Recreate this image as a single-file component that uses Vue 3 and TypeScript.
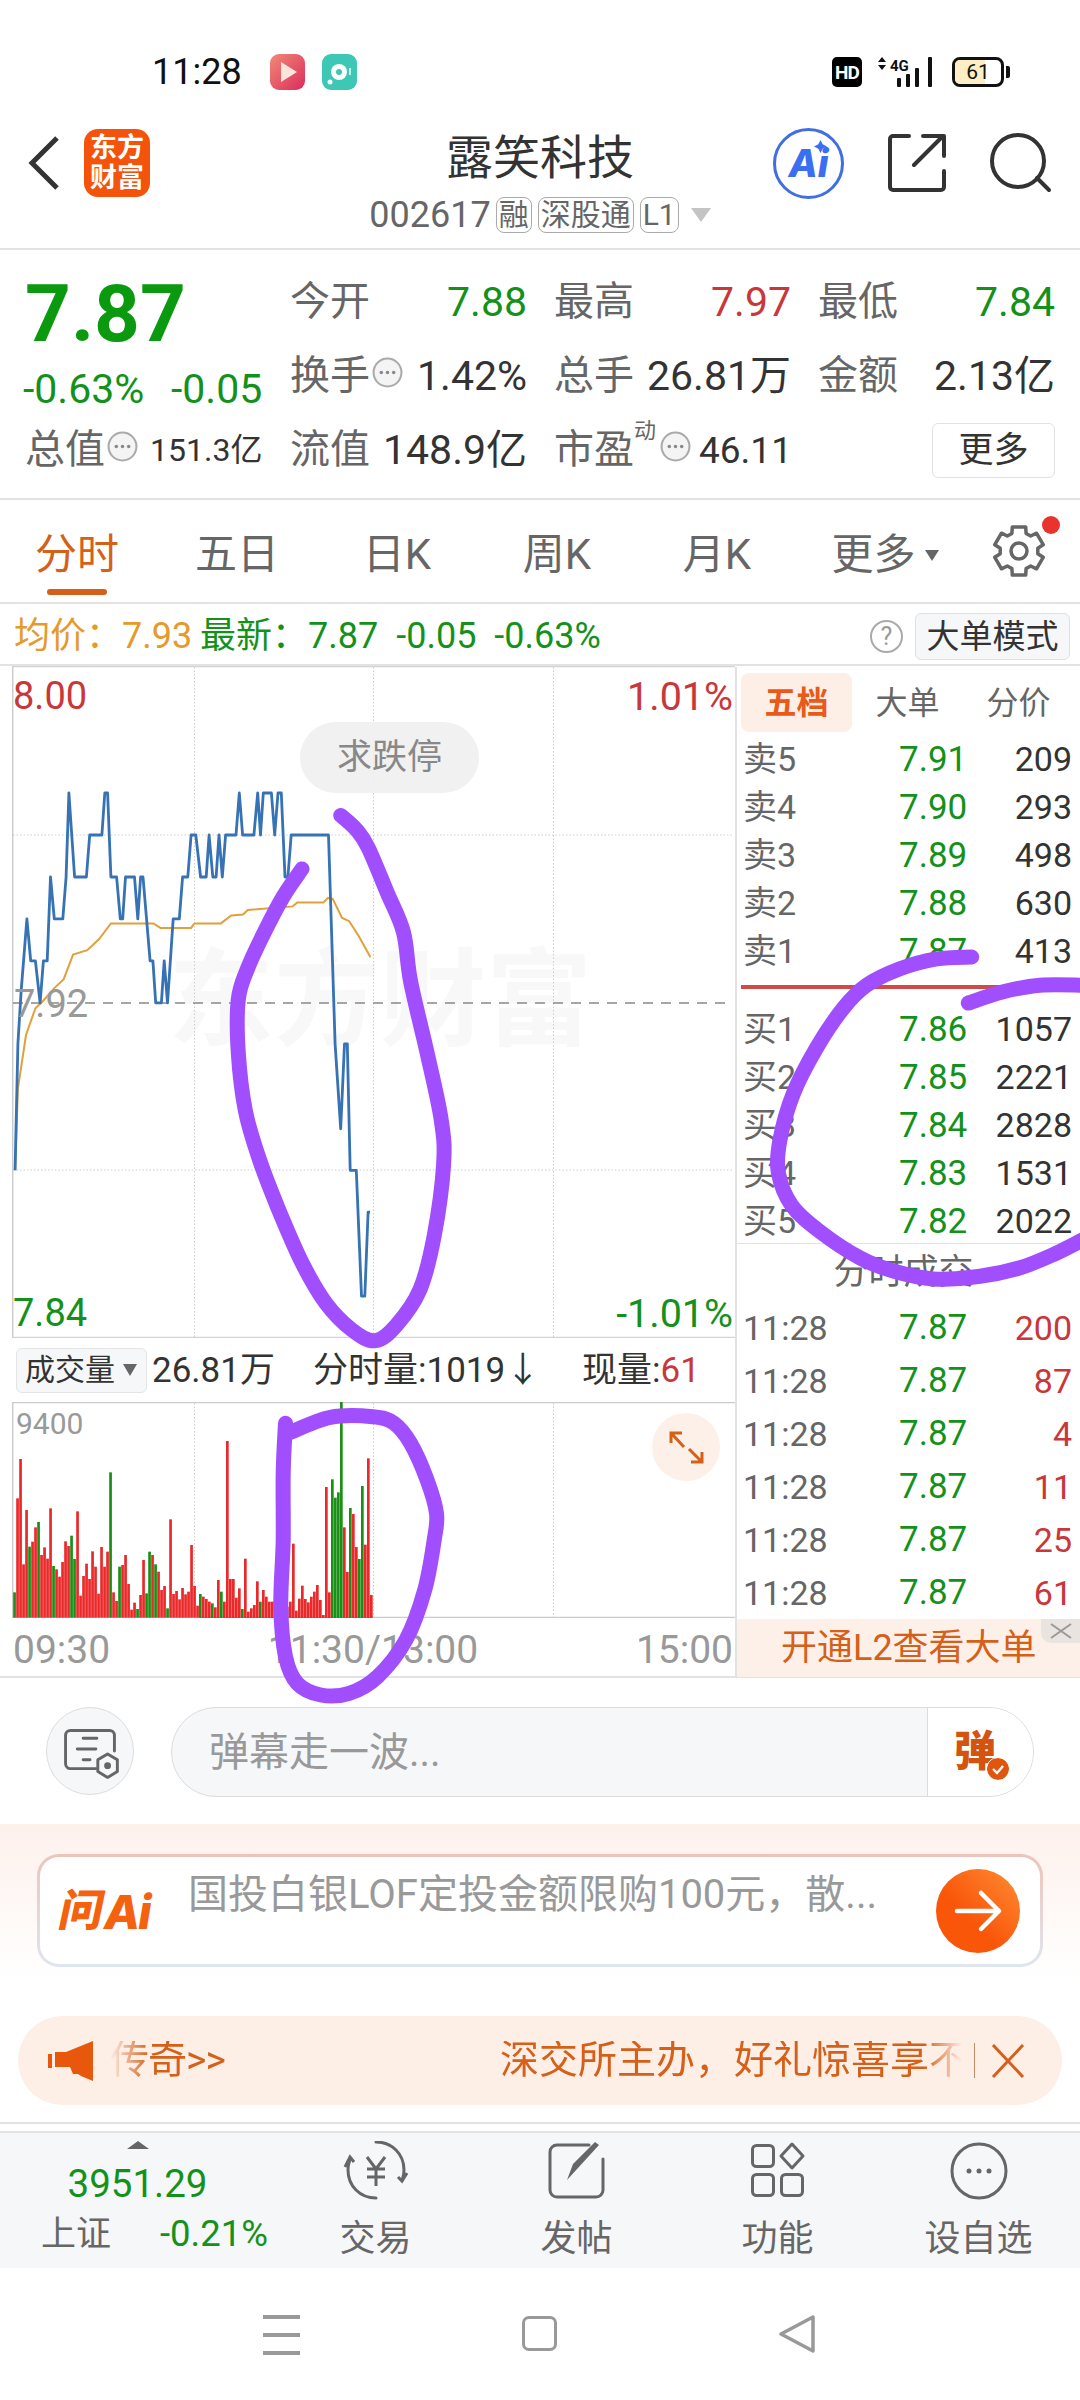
<script setup lang="ts">
type Pt = [number, number]

// Catmull-Rom through the points, written as cubic beziers
function smooth(p: Pt[]): string {
  let d = `M${p[0][0].toFixed(1)} ${p[0][1].toFixed(1)}`
  for (let i = 0; i < p.length - 1; i++) {
    const a = p[Math.max(i - 1, 0)]
    const b = p[i]
    const c = p[i + 1]
    const e = p[Math.min(i + 2, p.length - 1)]
    const c1x = b[0] + (c[0] - a[0]) / 6
    const c1y = b[1] + (c[1] - a[1]) / 6
    const c2x = c[0] - (e[0] - b[0]) / 6
    const c2y = c[1] - (e[1] - b[1]) / 6
    d += `C${c1x.toFixed(1)} ${c1y.toFixed(1)} ${c2x.toFixed(1)} ${c2y.toFixed(1)} ${c[0].toFixed(1)} ${c[1].toFixed(1)}`
  }
  return d
}

const chartPt = (q: Pt): Pt => [q[0] / 2.119, 660 + q[1] / 2.24]
const toPoly = (list: Pt[]) => list.map(chartPt).map((q) => `${q[0].toFixed(1)},${q[1].toFixed(1)}`).join(' ')

// Intraday price, on the 7.84–8.00 scale
const priceLine = toPoly([
  [32,1143],[38,860],[45,740],[57,580],[65,674],[75,674],[85,768],[92,674],[100,674],[107,486],[115,580],[133,580],
  [140,486],[146,298],[158,486],[183,486],[190,392],[216,392],[222,298],[228,298],[235,486],[247,486],[255,580],
  [260,580],[266,486],[285,486],[292,580],[298,486],[303,486],[318,674],[324,674],[330,768],[342,768],[348,674],
  [355,768],[367,580],[380,580],[387,486],[398,486],[405,392],[415,392],[425,486],[437,486],[443,392],[451,486],
  [458,486],[464,392],[471,486],[478,392],[500,392],[507,298],[514,392],[538,392],[546,298],[552,392],[558,298],
  [575,298],[582,392],[589,298],[596,298],[604,486],[610,486],[617,392],[696,392],[710,860],[722,1050],[730,860],
  [736,860],[742,1143],[755,1143],[766,1425],[773,1425],[780,1237],[784,1237],
])

// Average price
const avgLine = toPoly([
  [32,1143],[38,960],[55,840],[75,780],[90,765],[115,735],[135,715],[155,660],[185,650],[210,625],[235,590],[325,590],
  [340,600],[405,600],[412,590],[468,590],[490,572],[515,570],[525,560],[620,552],[630,543],[685,543],[695,533],
  [705,535],[725,578],[740,585],[760,618],[785,666],
])

// Per-minute volume: bar tops, negative values are down-ticks
const morning = [-457,175,57,373,210,-320,305,262,-246,345,322,356,205,-378,388,410,366,304,318,-287,-357,214,467,408,371,417,334,380,461,321,380,335,-97,457,483,-380,375,345,432,509,488,-507,465,360,-460,-335,345,-373,395,450,438,-505,238,462,453,478,444,463,455,315,438,497]
const midday = [-582,590,597,605,-610,622,540,-575,605,123,537,537,593,565,-627,476,635,625,615,544,-605,570,590,605,605,-618,620,630,600,620,605,431,632,596,557,597,607,590,575,555,600,645,261,577,-238,-293,-277,-5,382,516,-324,342,441,-477,-258,434,175,585]

interface Bar { x: number; y: number; h: number; down: boolean }
const bars: Bar[] = [
  ...morning.map((t, i) => {
    const top = Math.abs(t)
    return { x: 13.2 + i * 3, y: 1440 + top / 3, h: (533 - top) / 3, down: t < 0 }
  }),
  ...midday.map((t, i) => {
    const top = Math.abs(t)
    return { x: 199 + i * 3, y: 1400 + top / 3, h: (655 - top) / 3, down: t < 0 }
  }),
]

// Hand-drawn marker strokes across the page
const loopChart = smooth(([
  [640,468],[600,530],[560,610],[525,690],[505,760],[505,880],[520,1010],[550,1120],[590,1230],[640,1350],[690,1440],
  [745,1500],[795,1525],[840,1490],[890,1410],[920,1290],[940,1130],[935,1030],[905,880],[870,720],[855,610],[820,520],
  [780,420],[755,380],[722,348],
] as Pt[]).map(chartPt))
const loopVolume = smooth(([
  [605,250],[600,400],[600,600],[595,800],[605,950],[630,1030],[680,1065],[740,1060],[800,1010],[860,900],[900,750],
  [920,600],[925,520],[905,420],[870,310],[835,250],[790,230],[700,232],[610,280],
] as Pt[]).map((q): Pt => [q[0] / 2.119, 1340 + q[1] / 3]))
const depthPt = (q: Pt): Pt => [720 + q[0] / 3, 660 + q[1] / 1.522]
const loopDepth = smooth(([
  [755,452],[650,455],[540,470],[440,495],[370,530],[290,590],[220,660],[180,730],[175,780],[215,830],[300,870],
  [420,910],[520,930],[640,942],[780,938],[900,925],[1000,905],[1090,882],
] as Pt[]).map(depthPt))
const loopDepthTop = smooth(([[745,522],[850,505],[960,495],[1090,495]] as Pt[]).map(depthPt))

// Six-tooth settings gear
function gearPath(cx: number, cy: number, outer: number, inner: number): string {
  const pts: string[] = []
  for (let i = 0; i < 6; i++) {
    const a = (Math.PI / 3) * i - Math.PI / 2
    const w = 0.27
    const step = Math.PI / 3
    const corners: [number, number][] = [
      [inner, a - step / 2 + 0.14],
      [outer, a - w],
      [outer, a + w],
      [inner, a + step / 2 - 0.14],
    ]
    corners.forEach(([r, t]) => pts.push(`${(cx + r * Math.cos(t)).toFixed(1)} ${(cy + r * Math.sin(t)).toFixed(1)}`))
  }
  return `M${pts.join('L')}Z`
}
const gear = gearPath(27, 27, 25, 19)

const tabs = ['分时', '五日', '日K', '周K', '月K']
const sells = [
  { l: '卖5', p: '7.91', v: '209' },
  { l: '卖4', p: '7.90', v: '293' },
  { l: '卖3', p: '7.89', v: '498' },
  { l: '卖2', p: '7.88', v: '630' },
  { l: '卖1', p: '7.87', v: '413' },
]
const buys = [
  { l: '买1', p: '7.86', v: '1057' },
  { l: '买2', p: '7.85', v: '2221' },
  { l: '买3', p: '7.84', v: '2828' },
  { l: '买4', p: '7.83', v: '1531' },
  { l: '买5', p: '7.82', v: '2022' },
]
const trades = ['200', '87', '4', '11', '25', '61']
</script>

<template>
  <div class="page">
    <svg class="defs" width="0" height="0">
      <symbol id="more-dots" viewBox="0 0 30 30">
        <circle cx="15" cy="15" r="13.5" fill="#f4f4f4" stroke="#aaa" stroke-width="2" />
        <circle cx="9" cy="15" r="1.7" fill="#888" />
        <circle cx="15" cy="15" r="1.7" fill="#888" />
        <circle cx="21" cy="15" r="1.7" fill="#888" />
      </symbol>
    </svg>

    <!-- system status bar -->
    <div class="status">
      <span class="clock">11:28</span>
      <svg class="app-ico" viewBox="0 0 35 36">
        <defs>
          <linearGradient id="playBg" x1="0" y1="0" x2="1" y2="1">
            <stop offset="0" stop-color="#f08a78" />
            <stop offset="1" stop-color="#dc2c5a" />
          </linearGradient>
        </defs>
        <rect width="35" height="36" rx="9" fill="url(#playBg)" />
        <path d="M11 8L27 18L11 28Z" fill="#fbe4dc" />
      </svg>
      <svg class="app-ico second" viewBox="0 0 35 36">
        <rect width="35" height="36" rx="9" fill="#3cc8b4" />
        <circle cx="17" cy="18" r="8" fill="#fff" />
        <circle cx="17" cy="18" r="3" fill="#3cc8b4" />
        <circle cx="8" cy="28" r="2.5" fill="#fff" />
        <rect x="27" y="14" width="2" height="7" fill="#fff" opacity=".7" />
      </svg>
      <div class="status-right">
        <span class="hd">HD</span>
        <svg class="signal" viewBox="0 0 56 30">
          <path d="M4 0L8 5H0Z M4 13L0 8H8Z" fill="#111" />
          <text x="12" y="14" class="net">4G</text>
          <rect x="19" y="21" width="4" height="9" rx="1" fill="#111" />
          <rect x="28" y="17" width="4" height="13" rx="1" fill="#111" />
          <rect x="37" y="11" width="4" height="19" rx="1" fill="#111" />
          <rect x="50" y="0" width="4" height="30" rx="1" fill="#111" />
        </svg>
        <div class="battery"><span class="battery-fill"></span><span class="battery-num">61</span></div>
        <span class="battery-cap"></span>
      </div>
    </div>

    <!-- stock title bar -->
    <header class="head">
      <div class="head-left">
        <svg class="back" viewBox="0 0 32 56"><path d="M29 3L4 28L29 53" fill="none" stroke="#333" stroke-width="5" /></svg>
        <div class="logo"><span>东方</span><span>财富</span></div>
      </div>
      <div class="head-mid">
        <div class="title">露笑科技</div>
        <div class="sub">
          <span class="code">002617</span>
          <span class="tag">融</span>
          <span class="tag">深股通</span>
          <span class="tag">L1</span>
          <span class="sub-caret"></span>
        </div>
      </div>
      <div class="head-right">
        <div class="ai-badge">
          <span>Ai</span>
          <svg class="spark" viewBox="0 0 12 12"><path d="M6 0L8 4L12 6L8 8L6 12L4 8L0 6L4 4Z" fill="#3b6ef0" /></svg>
        </div>
        <svg class="act share" viewBox="888 153 58 58">
          <path d="M909 155H893a3 3 0 0 0-3 3V206a3 3 0 0 0 3 3H941a3 3 0 0 0 3-3V190M914 184L943 155M923 155H944V175" fill="none" stroke="#333" stroke-width="4" stroke-linecap="round" stroke-linejoin="round" />
        </svg>
        <svg class="act search" viewBox="990 152 62 60">
          <circle cx="1018" cy="180" r="26" fill="none" stroke="#333" stroke-width="4" />
          <path d="M1037 197L1049 209" stroke="#333" stroke-width="4" stroke-linecap="round" />
        </svg>
      </div>
    </header>

    <!-- quote summary -->
    <section class="quote">
      <div class="quote-left">
        <div class="price">7.87</div>
        <div class="change"><span>-0.63%</span><span>-0.05</span></div>
        <div class="cap">
          <span class="lab">总值</span>
          <svg class="dots"><use href="#more-dots" /></svg>
          <span class="cap-val">151.3亿</span>
        </div>
      </div>
      <div class="quote-grid">
        <div class="cell"><span class="lab">今开</span><span class="up-g">7.88</span></div>
        <div class="cell"><span class="lab">最高</span><span class="dn-r">7.97</span></div>
        <div class="cell"><span class="lab">最低</span><span class="up-g">7.84</span></div>
        <div class="cell">
          <span class="lab-group"><span class="lab">换手</span><svg class="dots"><use href="#more-dots" /></svg></span>
          <span class="val">1.42%</span>
        </div>
        <div class="cell"><span class="lab">总手</span><span class="val">26.81万</span></div>
        <div class="cell"><span class="lab">金额</span><span class="val">2.13亿</span></div>
        <div class="cell"><span class="lab">流值</span><span class="val">148.9亿</span></div>
        <div class="cell">
          <span class="lab-group">
            <span class="lab">市盈</span>
            <sup class="dyn">动</sup>
            <svg class="dots"><use href="#more-dots" /></svg>
            <span class="pe">46.11</span>
          </span>
        </div>
        <div class="cell end"><span class="more-btn">更多</span></div>
      </div>
    </section>

    <!-- chart period tabs -->
    <nav class="tabs">
      <div class="tab-list">
        <span v-for="(t, i) in tabs" :key="t" class="tab" :class="{ active: i === 0 }">{{ t }}</span>
        <span class="tab more">更多<i class="tab-caret"></i></span>
      </div>
      <div class="gear">
        <svg viewBox="0 0 54 54" width="54" height="54">
          <path :d="gear" fill="none" stroke="#666" stroke-width="3.5" stroke-linejoin="round" />
          <circle cx="27" cy="27" r="8" fill="none" stroke="#666" stroke-width="3.5" />
        </svg>
        <i class="gear-dot"></i>
      </div>
    </nav>

    <!-- latest price strip -->
    <div class="strip">
      <span class="avg">均价：<b>7.93</b></span>
      <span class="now">最新：<b>7.87</b></span>
      <span class="now gap">-0.05</span>
      <span class="now gap">-0.63%</span>
      <span class="help">?</span>
      <span class="mode-btn">大单模式</span>
    </div>

    <main class="board">
      <div class="charts">
        <div class="trend">
          <div class="watermark">东方财富</div>
          <svg class="trend-svg" viewBox="0 666 735 672" width="735" height="672">
            <path d="M13 666.5H735M13 1337.5H735" stroke="#d4d4d4" stroke-width="1.5" />
            <path d="M12.7 666V1338" stroke="#ccc" stroke-width="1.5" />
            <path d="M13 835H733M13 1170H733M194.5 667V1337M373.5 667V1337M553.5 667V1337" stroke="#ccc" stroke-width="1" stroke-dasharray="1.5 2" />
            <path d="M13 1003H733" stroke="#888" stroke-width="1.5" stroke-dasharray="10 8" />
            <polyline :points="avgLine" fill="none" stroke="#e2a03c" stroke-width="2" />
            <polyline :points="priceLine" fill="none" stroke="#3672b4" stroke-width="2.8" stroke-linejoin="round" />
          </svg>
          <span class="axis top-l dn-r">8.00</span>
          <span class="axis pct top-r dn-r">1.01%</span>
          <span class="axis mid-l">7.92</span>
          <span class="axis low-l up-g">7.84</span>
          <span class="axis pct low-r up-g">-1.01%</span>
          <span class="wish">求跌停</span>
        </div>

        <div class="vol-head">
          <span class="vol-select">成交量<i></i></span>
          <span class="vol-total">26.81万</span>
          <span class="vol-min">分时量:1019<em>↓</em></span>
          <span class="vol-cur">现量:<b>61</b></span>
        </div>

        <div class="volume">
          <svg class="vol-svg" viewBox="0 1402 735 216" width="735" height="216">
            <path d="M13 1402.5H735M13 1617.5H735" stroke="#ccc" stroke-width="1.5" />
            <path d="M12.7 1402V1618" stroke="#ccc" stroke-width="1.5" />
            <path d="M194.5 1403V1617M373.5 1403V1617M553.5 1403V1617" stroke="#ccc" stroke-width="1" stroke-dasharray="1.5 2" />
            <rect v-for="(b, i) in bars" :key="i" :x="b.x" :y="b.y" width="2.7" :height="b.h" :fill="b.down ? '#1b8f16' : '#ea2a2a'" />
          </svg>
          <span class="vol-max">9400</span>
          <span class="expand">
            <svg viewBox="668 1430 37 35" width="37" height="35">
              <path d="M671 1443V1433H682M671 1433L684 1447M702 1452V1462H691M702 1462L689 1449" fill="none" stroke="#d4601a" stroke-width="3" />
            </svg>
          </span>
        </div>

        <div class="time-axis"><span>09:30</span><span>11:30/13:00</span><span>15:00</span></div>
      </div>

      <aside class="depth">
        <div class="depth-tabs">
          <span class="depth-tab on">五档</span>
          <span class="depth-tab">大单</span>
          <span class="depth-tab">分价</span>
        </div>
        <div v-for="r in sells" :key="r.l" class="row">
          <span class="gray">{{ r.l }}</span><span class="up-g">{{ r.p }}</span><span class="dark">{{ r.v }}</span>
        </div>
        <div class="divider"></div>
        <div class="buy-block">
          <div v-for="r in buys" :key="r.l" class="row">
            <span class="gray">{{ r.l }}</span><span class="up-g">{{ r.p }}</span><span class="dark">{{ r.v }}</span>
          </div>
        </div>
        <div class="trade-title">分时成交<i></i></div>
        <div v-for="(v, i) in trades" :key="i" class="row trade">
          <span class="gray">11:28</span><span class="up-g">7.87</span><span class="dn-r">{{ v }}</span>
        </div>
        <div class="l2">
          开通L2查看大单
          <span class="l2-close">
            <svg viewBox="0 0 24 16" width="24" height="16"><path d="M2 1L22 15M22 1L2 15" stroke="#999" stroke-width="2" /></svg>
          </span>
        </div>
      </aside>
    </main>

    <!-- danmaku input -->
    <div class="compose">
      <span class="compose-ico">
        <svg viewBox="46 1708 88 88" width="88" height="88">
          <path d="M96 1770H70a5 5 0 0 1-5-5V1736a5 5 0 0 1 5-5H110a5 5 0 0 1 5 5V1752" fill="none" stroke="#666" stroke-width="3" stroke-linecap="round" />
          <path d="M83 1739H97M77 1750H96M83 1761H90" stroke="#666" stroke-width="3" stroke-linecap="round" />
          <path d="M108 1755L118 1761V1773L108 1779L98 1773V1761Z" fill="none" stroke="#666" stroke-width="3" stroke-linejoin="round" />
          <circle cx="108" cy="1767" r="3.5" fill="#666" />
        </svg>
      </span>
      <div class="input">
        <span class="placeholder">弹幕走一波...</span>
        <span class="send">
          <b>弹</b>
          <svg class="send-ok" viewBox="0 0 22 22" width="22" height="22">
            <circle cx="11" cy="11" r="11" fill="#e0560f" />
            <path d="M6 11L10 15L16 8" fill="none" stroke="#fff" stroke-width="2.4" />
          </svg>
        </span>
      </div>
    </div>

    <!-- assistant prompt and notice -->
    <section class="promo">
      <div class="ask">
        <span class="ask-logo"><b>问</b><em>Ai</em></span>
        <span class="ask-text">国投白银LOF定投金额限购100元，散...</span>
        <span class="ask-go">
          <svg viewBox="0 0 84 84" width="84" height="84">
            <path d="M21 42H62M45 24L63 42L45 60" fill="none" stroke="#fff" stroke-width="4.5" stroke-linecap="round" stroke-linejoin="round" />
          </svg>
        </span>
      </div>
      <div class="notice">
        <svg class="horn" viewBox="0 0 46 40" width="46" height="40">
          <path d="M0 13H4V27H0ZM7 11H18L45 0V40L33 35L30 33H25L22 26H7Z" fill="#e8580c" />
        </svg>
        <span class="notice-a">传奇&gt;&gt;</span>
        <span class="notice-b">深交所主办，好礼惊喜享不</span>
        <span class="notice-sep"></span>
        <svg class="notice-x" viewBox="0 0 36 36" width="36" height="36"><path d="M3 2L33 34M33 2L3 34" stroke="#d4601a" stroke-width="3" /></svg>
      </div>
    </section>

    <!-- bottom action bar -->
    <footer class="dock">
      <div class="index">
        <i class="index-caret"></i>
        <div class="index-num">3951.29</div>
        <div class="index-sub"><span>上证</span><b>-0.21%</b></div>
      </div>
      <div class="dock-item">
        <svg viewBox="343 2142 66 60" width="66" height="60">
          <path d="M376 2143C392 2143 404 2155 404 2171C404 2174 403.5 2177 402.5 2180M376 2199C360 2199 348 2187 348 2171C348 2168 348.5 2165 349.5 2162" fill="none" stroke="#666" stroke-width="3" stroke-linecap="round" />
          <path d="M407 2174L402 2182L398 2178M345 2168L350 2158L354 2163" fill="none" stroke="#666" stroke-width="3" />
          <path d="M367 2158L376 2170L385 2158M376 2170V2187M367 2170H385M367 2178H385" fill="none" stroke="#666" stroke-width="3" />
        </svg>
        <span>交易</span>
      </div>
      <div class="dock-item">
        <svg viewBox="548 2142 60 60" width="60" height="60">
          <path d="M590 2146H558a7 7 0 0 0-7 7V2191a7 7 0 0 0 7 7H597a7 7 0 0 0 7-7V2160" fill="none" stroke="#666" stroke-width="3" stroke-linecap="round" />
          <path d="M600 2146L568 2181L574 2165L596 2143Z" fill="#666" />
        </svg>
        <span>发帖</span>
      </div>
      <div class="dock-item">
        <svg viewBox="750 2144 58 58" width="58" height="58">
          <rect x="753.5" y="2147.5" width="21" height="21" rx="4" fill="none" stroke="#666" stroke-width="3" />
          <rect x="753.5" y="2176.5" width="21" height="21" rx="4" fill="none" stroke="#666" stroke-width="3" />
          <rect x="782.5" y="2176.5" width="21" height="21" rx="4" fill="none" stroke="#666" stroke-width="3" />
          <path d="M793 2146L804 2158L793 2170L782 2158Z" fill="none" stroke="#666" stroke-width="3" stroke-linejoin="round" />
        </svg>
        <span>功能</span>
      </div>
      <div class="dock-item">
        <svg viewBox="949 2142 60 60" width="60" height="60">
          <circle cx="979" cy="2172" r="27" fill="none" stroke="#666" stroke-width="3" />
          <circle cx="969" cy="2172" r="2.5" fill="#666" />
          <circle cx="979" cy="2172" r="2.5" fill="#666" />
          <circle cx="989" cy="2172" r="2.5" fill="#666" />
        </svg>
        <span>设自选</span>
      </div>
    </footer>

    <!-- system navigation -->
    <div class="sysnav">
      <span class="burger"><i></i><i></i><i></i></span>
      <span class="home"></span>
      <svg class="sys-back" viewBox="0 0 38 38" width="38" height="38">
        <path d="M35 2V36L3 19Z" fill="none" stroke="#999" stroke-width="3.5" stroke-linejoin="round" />
      </svg>
    </div>

    <!-- marker strokes drawn over the finished page -->
    <svg class="marker" viewBox="0 0 1080 2400" width="1080" height="2400">
      <path :d="loopChart" />
      <path :d="loopVolume" />
      <path :d="loopDepth" />
      <path :d="loopDepthTop" />
    </svg>
  </div>
</template>

<style scoped>
.page {
  position: relative;
  width: 1080px;
  height: 2400px;
  overflow: hidden;
  background: #fff;
  font-family: Roboto, "Noto Sans CJK SC", sans-serif;
  color: #333;
  line-height: 1;
}
.defs { position: absolute; }
.up-g { color: #14911a; }
.dn-r { color: #c8373a; }

/* status bar */
.status {
  height: 105px;
  padding: 40px 70px 1px 152px;
  box-sizing: border-box;
  display: flex;
  align-items: center;
}
.clock { font-size: 36px; color: #111; width: 118px; }
.app-ico { width: 35px; height: 36px; }
.app-ico.second { margin-left: 17px; }
.status-right { margin-left: auto; display: flex; align-items: center; }
.hd {
  width: 30px; height: 30px; border-radius: 5px; background: #000; color: #fff;
  font-size: 19px; font-weight: 700; letter-spacing: -1px;
  display: flex; align-items: center; justify-content: center;
}
.signal { width: 56px; height: 30px; margin-left: 16px; }
.net { font-size: 15px; font-weight: 700; fill: #111; font-family: Roboto, sans-serif; }
.battery {
  position: relative; margin-left: 18px; width: 52px; height: 30px; box-sizing: border-box;
  border: 3px solid #111; border-radius: 8px; overflow: hidden;
  display: flex; align-items: center; justify-content: center;
}
.battery-fill { position: absolute; left: 0; top: 0; bottom: 0; width: 65%; background: #fdeec4; }
.battery-num { position: relative; font-size: 21px; color: #111; }
.battery-cap { width: 4px; height: 12px; margin-left: 2px; background: #111; border-radius: 0 2px 2px 0; }

/* title bar */
.head {
  height: 145px;
  box-sizing: border-box;
  border-bottom: 2px solid #e2e2e2;
  display: grid;
  grid-template-columns: 1fr auto 1fr;
  padding: 0 28px 0 28px;
}
.head-left { display: flex; align-items: center; padding-top: 9px; padding-bottom: 36px; }
.back { width: 32px; height: 56px; }
.logo {
  margin-left: 24px; width: 66px; height: 68px; border-radius: 14px; background: #f4530b; color: #fff;
  font-size: 27px; font-weight: 700; line-height: 30px;
  display: flex; flex-direction: column; align-items: center; justify-content: center;
}
.head-mid { display: flex; flex-direction: column; align-items: center; padding-top: 28px; }
.title { font-size: 47px; height: 50px; line-height: 50px; color: #333; }
.sub { display: flex; align-items: center; margin-top: 14px; color: #666; height: 36px; }
.code { font-size: 36px; margin-right: 5px; }
.tag {
  font-size: 30px; height: 36px; line-height: 34px; padding: 0 2px; box-sizing: border-box;
  border: 1.5px solid #aaa; border-radius: 8px; margin-right: 6px;
}
.sub-caret {
  margin-left: 6px; width: 0; height: 0;
  border-left: 10px solid transparent; border-right: 10px solid transparent; border-top: 14px solid #c4c4c4;
}
.head-right { display: flex; align-items: center; justify-content: flex-end; padding-top: 9px; padding-bottom: 36px; }
.ai-badge {
  position: relative; width: 71px; height: 71px; box-sizing: border-box;
  border: 3.5px solid #3f6fe0; border-radius: 50%;
  display: flex; align-items: center; justify-content: center;
  color: #3b6ef0; font: italic 800 38px Inter, sans-serif;
}
.spark { position: absolute; width: 13px; height: 13px; right: 14px; top: 9px; }
.act.share { width: 58px; height: 58px; margin-left: 44px; }
.act.search { width: 62px; height: 60px; margin-left: 44px; }

/* quote */
.quote {
  height: 250px;
  box-sizing: border-box;
  border-bottom: 2px solid #e2e2e2;
  padding: 15px 25px 0;
  display: flex;
}
.quote-left { width: 265px; flex: none; }
.price { height: 96px; line-height: 98px; font-size: 80px; font-weight: 700; color: #0b9a0f; }
.change { height: 52px; padding-top: 5px; box-sizing: border-box; display: flex; align-items: center; font-size: 41px; color: #14911a; margin-left: -2px; }
.change span:first-child { width: 148px; }
.cap { height: 74px; display: flex; align-items: center; }
.cap-val { font-size: 32px; margin-left: 12px; color: #333; }
.lab { font-size: 40px; color: #666; flex: none; white-space: nowrap; }
.dots { width: 31px; height: 31px; margin-left: 2px; flex: none; align-self: center; margin-bottom: 8px; }
.quote-grid {
  display: grid;
  grid-template-columns: 237px 237px 237px;
  grid-auto-rows: 74px;
  column-gap: 27px;
  font-size: 41px;
}
.cell { display: flex; align-items: center; justify-content: space-between; }
.cell.end { justify-content: flex-end; }
.lab-group { display: flex; align-items: center; flex: none; white-space: nowrap; }
.val { color: #333; white-space: nowrap; }
.dyn { font-size: 22px; color: #666; align-self: flex-start; margin-top: -10px; width: 24px; flex: none; }
.pe { font-size: 37px; color: #333; margin-left: 8px; }
.more-btn {
  width: 123px; height: 55px; box-sizing: border-box; border: 1.5px solid #e2e2e2; border-radius: 6px;
  display: flex; align-items: center; justify-content: center; font-size: 35px; color: #333;
}

/* tabs */
.tabs {
  height: 104px;
  box-sizing: border-box;
  border-bottom: 2px solid #e2e2e2;
  display: flex;
  align-items: center;
}
.tab-list { display: grid; grid-template-columns: repeat(6, 160px); margin-left: -3px; }
.tab { position: relative; text-align: center; font-size: 42px; color: #666; padding-top: 8px; }
.tab.active { color: #d4601a; }
.tab.active::after {
  content: ""; position: absolute; left: 50px; width: 60px; height: 6px; top: 63px;
  background: #d4601a; border-radius: 3px;
}
.tab.more { display: flex; align-items: center; justify-content: center; padding-left: 16px; }
.tab-caret {
  margin-left: 9px; width: 0; height: 0;
  border-left: 7px solid transparent; border-right: 7px solid transparent; border-top: 11px solid #666;
}
.gear { position: relative; margin-left: 35px; width: 54px; height: 54px; }
.gear-dot { position: absolute; right: -14px; top: -8px; width: 18px; height: 18px; border-radius: 50%; background: #e8332e; }

/* strip */
.strip {
  height: 62px;
  box-sizing: border-box;
  border-bottom: 2px solid #e2e2e2;
  padding: 4px 10px 0 14px;
  display: flex;
  align-items: center;
  font-size: 36px;
}
.strip b { font-weight: 400; }
.avg { color: #e59a2a; width: 186px; }
.now { color: #14911a; }
.now.gap { margin-left: 18px; }
.help {
  margin-left: auto; width: 33px; height: 33px; box-sizing: border-box; border: 2px solid #aaa; border-radius: 50%;
  font-size: 25px; color: #999; display: flex; align-items: center; justify-content: center;
}
.mode-btn {
  margin-left: 12px; width: 155px; height: 47px; box-sizing: border-box; background: #f6f7f9;
  border: 1.5px solid #e0e0e0; border-radius: 6px; font-size: 33px; color: #333;
  display: flex; align-items: center; justify-content: center;
}

/* board */
.board {
  height: 1012px;
  box-sizing: border-box;
  display: flex;
  border-bottom: 2px solid #e2e2e2;
}
.charts { width: 735px; flex: none; }
.trend { position: relative; height: 672px; }
.trend-svg { position: relative; display: block; }
.watermark {
  position: absolute; left: 168px; top: 282px; font-size: 106px; font-weight: 700; color: #f8f8f8; white-space: nowrap;
}
.axis { position: absolute; font-size: 38px; }
.axis.pct { font-size: 39.5px; }
.top-l { left: 13px; top: 11px; }
.top-r { right: 2px; top: 11px; }
.mid-l { left: 14px; top: 319px; color: #999; }
.low-l { left: 13px; top: 628px; }
.low-r { right: 2px; top: 628px; }
.wish {
  position: absolute; left: 300px; top: 56px; width: 179px; height: 71px; border-radius: 36px;
  background: rgba(240, 240, 240, .92); color: #888; font-size: 35px;
  display: flex; align-items: center; justify-content: center;
}
.vol-head { height: 64px; display: flex; align-items: center; padding-left: 16px; font-size: 35px; color: #333; white-space: nowrap; }
.vol-select {
  width: 131px; height: 45px; box-sizing: border-box; background: #f6f7f9; border: 1px solid #e4e4e4; border-radius: 6px;
  padding-left: 8px; margin-right: 5px; font-size: 30px; display: flex; align-items: center; flex: none;
}
.vol-select i {
  margin-left: 8px; width: 0; height: 0;
  border-left: 7px solid transparent; border-right: 7px solid transparent; border-top: 12px solid #666;
}
.vol-total { width: 161px; flex: none; }
.vol-min { width: 269px; flex: none; }
.vol-min em { font-style: normal; }
.vol-cur b { font-weight: 400; color: #c8373a; }
.volume { position: relative; height: 216px; }
.vol-svg { display: block; }
.vol-max { position: absolute; left: 16px; top: 7px; font-size: 30px; color: #999; }
.expand {
  position: absolute; left: 652px; top: 11px; width: 68px; height: 68px; border-radius: 50%; background: #fdf0e8;
  display: flex; align-items: center; justify-content: center;
}
.time-axis {
  height: 58px; padding: 6px 2px 0 13px; box-sizing: border-box;
  display: flex; justify-content: space-between; align-items: center; font-size: 39px; color: #999;
}

/* order book */
.depth { flex: 1; border-left: 2px solid #e2e2e2; box-sizing: border-box; height: 1010px; font-size: 34px; margin-top: 1px; }
.depth-tabs { height: 62px; padding: 6px 6px 0 4px; display: flex; }
.depth-tab { width: 111px; height: 59px; display: flex; align-items: center; justify-content: center; font-size: 32px; color: #666; }
.depth-tab.on { color: #e8591a; font-weight: 700; background: #fdeee6; border-radius: 8px; }
.row {
  height: 48px; padding: 0 8px 0 6px;
  display: grid; grid-template-columns: 156px 70px 1fr; align-items: center;
}
.row > :nth-child(2) { font-size: 35px; white-space: nowrap; }
.row > :nth-child(3) { text-align: right; }
.gray { color: #666; }
.dark { color: #333; }
.divider { height: 4px; margin: 10px 0 16px 4px; background: #d14a4a; }
.buy-block { height: 238px; }
.trade-title {
  height: 58px; border-top: 1.5px solid #e2e2e2; box-sizing: border-box; padding-left: 16px;
  display: flex; align-items: center; justify-content: center; font-size: 35px; color: #666;
}
.trade-title i {
  margin-left: 10px; width: 0; height: 0;
  border-left: 8px solid transparent; border-right: 8px solid transparent; border-bottom: 9px solid #666;
}
.row.trade { height: 53px; }
.l2 {
  position: relative; height: 58px; background: #fdf0e8; color: #d4601a; font-size: 36px;
  display: flex; align-items: center; padding-left: 44px; white-space: nowrap;
}
.l2-close {
  position: absolute; right: 0; top: 0; width: 39px; height: 24px; background: #e9e4e0; border-radius: 0 0 0 10px;
  display: flex; align-items: center; justify-content: center;
}

/* compose */
.compose { height: 146px; box-sizing: border-box; padding: 29px 46px 0; display: flex; }
.compose-ico {
  width: 88px; height: 88px; border-radius: 50%; background: #f6f7f9; box-sizing: border-box;
  border: 1.5px solid #ddd; overflow: hidden; display: flex; align-items: center; justify-content: center; flex: none;
}
.input {
  margin-left: 37px; width: 863px; height: 90px; box-sizing: border-box; border-radius: 45px;
  background: #f6f7f9; border: 1.5px solid #dcdcdc; display: flex; align-items: center; overflow: hidden;
}
.placeholder { padding: 2px 0 0 37px; font-size: 40px; color: #999; }
.send {
  position: relative; margin-left: auto; width: 106px; height: 100%; border-left: 1.5px solid #dcdcdc; background: #fff;
  display: flex; align-items: center; padding-left: 26px; box-sizing: border-box;
}
.send b { font-size: 42px; font-weight: 900; color: #d4540f; }
.send-ok { position: absolute; left: 58px; top: 49px; border: 1px solid #fff; border-radius: 50%; }

/* promo */
.promo {
  height: 300px; box-sizing: border-box; padding: 30px 18px 0; border-bottom: 2px solid #e2e2e2;
  background: linear-gradient(#fdf1ec 0, #fff 160px);
}
.ask {
  position: relative; margin: 0 19px; height: 113px; box-sizing: border-box; border-radius: 22px; background: #fff;
  border: 3px solid transparent;
  background-image: linear-gradient(#fff, #fff), linear-gradient(#edc4bb, #dfe6ef);
  background-origin: border-box; background-clip: padding-box, border-box;
  display: flex; align-items: flex-start;
}
.ask-logo {
  margin: 32px 0 0 20px; width: 128px; color: #f4620f; display: flex; align-items: center; white-space: nowrap;
  height: 44px; flex: none;
}
.ask-logo b { font-size: 44px; font-weight: 900; transform: skewX(-12deg); }
.ask-logo em { font: italic 800 47px Inter, sans-serif; letter-spacing: -2px; }
.ask-text { margin-top: 18px; font-size: 40px; color: #999; white-space: nowrap; }
.ask-go {
  position: absolute; right: 20px; top: 12px; width: 84px; height: 84px; border-radius: 50%;
  background: linear-gradient(225deg, #ff8d33, #f9560a 60%);
}
.notice {
  margin-top: 49px; height: 89px; border-radius: 45px; background: #fdeee6; color: #d4601a;
  display: flex; align-items: center; padding-left: 30px; font-size: 39px;
}
.horn { flex: none; }
.notice-a {
  margin-left: 16px; width: 126px; flex: none; white-space: nowrap; letter-spacing: -1px;
  -webkit-mask-image: linear-gradient(to right, transparent, #000 40px);
  mask-image: linear-gradient(to right, transparent, #000 40px);
}
.notice-b {
  margin-left: 264px; width: 462px; flex: none; overflow: hidden; white-space: nowrap;
  -webkit-mask-image: linear-gradient(to left, transparent, #000 38px);
  mask-image: linear-gradient(to left, transparent, #000 38px);
}
.notice-sep { margin-left: 12px; width: 1px; height: 35px; background: #c98a68; }
.notice-x { margin-left: 15px; }

/* dock */
.dock {
  margin-top: 7px; height: 137px; box-sizing: border-box; background: #f6f7f9; border-top: 2px solid #e2e2e2;
  display: flex;
}
.index { position: relative; width: 275px; flex: none; padding-top: 32px; box-sizing: border-box; }
.index-caret {
  position: absolute; left: 127px; top: 8px; width: 0; height: 0;
  border-left: 11px solid transparent; border-right: 11px solid transparent; border-bottom: 8px solid #666;
}
.index-num { text-align: center; font-size: 38.5px; color: #14911a; height: 38px; line-height: 38px; }
.index-sub { display: flex; align-items: center; margin-top: 11px; padding-left: 41px; height: 40px; }
.index-sub span { font-size: 35px; color: #666; }
.index-sub b { margin-left: 49px; font-weight: 400; font-size: 36.5px; color: #14911a; }
.dock-item { width: 201px; flex: none; display: flex; flex-direction: column; align-items: center; font-size: 36px; color: #666; padding-top: 8px; box-sizing: border-box; }
.dock-item svg { height: 60px; flex: none; }
.dock-item span { margin-top: 20px; }

/* system nav */
.sysnav { position: relative; height: 132px; }
.burger { position: absolute; left: 263px; top: 47px; width: 37px; display: flex; flex-direction: column; gap: 14px; }
.burger i { height: 4px; background: #999; }
.home { position: absolute; left: 522px; top: 48px; width: 35px; height: 35px; box-sizing: border-box; border: 3.5px solid #999; border-radius: 7px; }
.sys-back { position: absolute; left: 778px; top: 47px; }

/* marker overlay */
.marker { position: absolute; left: 0; top: 0; pointer-events: none; }
.marker path { fill: none; stroke: #a14eff; stroke-width: 15; stroke-linecap: round; stroke-linejoin: round; }
</style>
